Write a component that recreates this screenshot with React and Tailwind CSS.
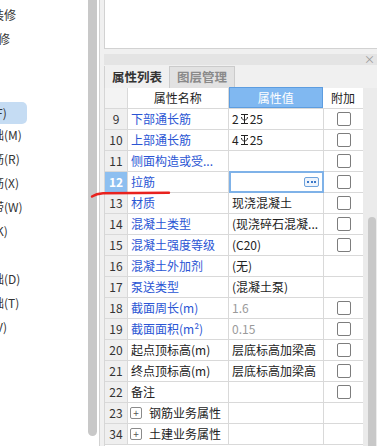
import React from "react";

const leftItems = [
  { t: "装修", ml: -8 },
  { t: "装修", ml: -14 },
  { t: "" },
  { t: "" },
  { t: "基础梁(F)", ml: -44, active: true },
  { t: "筏板基础(M)", ml: -44 },
  { t: "筏板主筋(R)", ml: -44 },
  { t: "筏板负筋(X)", ml: -44 },
  { t: "基础板带(W)", ml: -44 },
  { t: "集水坑(K)", ml: -44 },
  { t: "柱墩(Y)", ml: -44 },
  { t: "独立基础(D)", ml: -44 },
  { t: "条形基础(T)", ml: -44 },
  { t: "桩承台(V)", ml: -44 },
  { t: "桩(U)", ml: -44 },
  { t: "", ml: -44 },
  { t: "", ml: -44 },
  { t: "", ml: -44 },
];

// rebar grade glyph (HRB400)
const Rebar = () => (
  <svg width="9" height="12" viewBox="0 0 9 12" className="mx-[1px]">
    <path
      d="M1 1.5H8M1 10.5H8M4.5 1.5V10.5M1.5 4C1.5 8 7.5 8 7.5 4"
      fill="none"
      stroke="#222"
      strokeWidth="1"
    />
  </svg>
);

const rows = [
  { n: "9", name: "下部通长筋", blue: true, val: <span className="flex items-center">2<Rebar />25</span>, cb: true },
  { n: "10", name: "上部通长筋", blue: true, val: <span className="flex items-center">4<Rebar />25</span>, cb: true },
  { n: "11", name: "侧面构造或受...", blue: true, val: "", cb: true },
  { n: "12", name: "拉筋", blue: true, val: "", cb: true, sel: true },
  { n: "13", name: "材质", blue: true, val: "现浇混凝土", cb: true },
  { n: "14", name: "混凝土类型", blue: true, val: "(现浇碎石混凝...", cb: true },
  { n: "15", name: "混凝土强度等级", blue: true, val: "(C20)", cb: true },
  { n: "16", name: "混凝土外加剂", blue: true, val: "(无)" },
  { n: "17", name: "泵送类型", blue: true, val: "(混凝土泵)" },
  { n: "18", name: "截面周长(m)", blue: true, val: "1.6", grey: true, cb: true },
  { n: "19", name: "截面面积(m²)", blue: true, val: "0.15", grey: true, cb: true },
  { n: "20", name: "起点顶标高(m)", val: "层底标高加梁高", cb: true },
  { n: "21", name: "终点顶标高(m)", val: "层底标高加梁高", cb: true },
  { n: "22", name: "备注", val: "", cb: true },
  { n: "23", name: "钢筋业务属性", val: "", group: true },
  { n: "34", name: "土建业务属性", val: "", group: true },
];

const Checkbox = () => (
  <div className="w-[14px] h-[14px] rounded-[2px] border border-[#7d7d7d] bg-white" />
);

const App = () => {
  return (
    <div className="relative w-[377px] h-[446px] overflow-hidden flex bg-white text-[12px] text-[#222] font-['Noto_Sans_CJK_SC','Noto_Sans',sans-serif]">
      {/* left tree panel */}
      <div className="w-[88px] shrink-0 overflow-hidden pt-[3px] text-[#333]">
        {leftItems.map((it, i) => (
          <div key={i} className="h-[24px] flex items-center">
            {it.active ? (
              <div className="w-[27px] h-[22px] mt-[4px] rounded-r-[5px] bg-[#c5dcf3] flex items-center overflow-hidden">
                <span className="whitespace-nowrap" style={{ marginLeft: it.ml }}>
                  {it.t}
                </span>
              </div>
            ) : (
              <span className="whitespace-nowrap" style={{ marginLeft: it.ml || 0 }}>
                {it.t}
              </span>
            )}
          </div>
        ))}
      </div>

      {/* left scrollbar */}
      <div className="w-[11px] shrink-0 bg-white">
        <div className="w-[9px] h-[436px] bg-[#c8c8c8] rounded-b-[5px]" />
      </div>
      <div className="w-px shrink-0 bg-[#d2d2d2]" />
      <div className="w-[4px] shrink-0 bg-[#f0f0f0]" />

      {/* right property panel */}
      <div className="flex-1 flex flex-col bg-[#f0f0f0]">
        <div className="h-[49px] shrink-0 bg-white border-l border-b border-[#d2d2d2]" />
        <div className="h-[5px] shrink-0" />
        <div className="h-[11px] shrink-0 bg-[#e4e4e4] flex items-center justify-end pr-[2px] text-[#999] text-[11px] leading-none">
          ×
        </div>
        <div className="h-[23px] shrink-0 flex items-stretch pt-[1px] text-[12.5px] font-semibold">
          <div className="w-[65px] flex items-center justify-center text-[#333] border-l border-[#d2d2d2]">
            属性列表
          </div>
          <div className="w-[66px] flex items-center justify-center text-[#8a8a8a] bg-[#e2e2e2] border border-b-0 border-[#cbcbcb]">
            图层管理
          </div>
        </div>

        <div className="flex-1 flex">
          {/* table */}
          <div className="w-[259px] shrink-0 border-l border-[#d6d6d6] bg-white">
            <div className="h-[21px] flex border-b border-[#d9d9d9]">
              <div className="w-[23px] border-r border-[#d9d9d9] bg-[#f3f3f3]" />
              <div className="w-[101px] border-r border-[#d9d9d9] flex items-center justify-center">
                属性名称
              </div>
              <div className="w-[95px] bg-[#80b8f1] border border-[#5d9de0] -mt-px flex items-center justify-center text-white">
                属性值
              </div>
              <div className="w-[40px] flex items-center justify-center">附加</div>
            </div>

            {rows.map((r) => (
              <div key={r.n} className="h-[21px] flex border-b border-[#d9d9d9]">
                <div
                  className={
                    r.sel
                      ? "w-[23px] shrink-0 border-r border-[#d9d9d9] bg-[#8dbff0] text-white font-semibold flex items-center justify-center"
                      : "w-[23px] shrink-0 border-r border-[#d9d9d9] bg-[#efefef] text-[#333] flex items-center justify-center"
                  }
                >
                  {r.n}
                </div>
                <div
                  className={
                    r.blue
                      ? "w-[101px] shrink-0 border-r border-[#d9d9d9] pl-[3px] flex items-center whitespace-nowrap overflow-hidden text-[#2a55d4]"
                      : "w-[101px] shrink-0 border-r border-[#d9d9d9] pl-[3px] flex items-center whitespace-nowrap overflow-hidden text-[#222]"
                  }
                >
                  {r.group && (
                    <span className="w-[12px] h-[12px] mr-[7px] ml-[-1px] rounded-[2px] border border-[#8a8a8a] flex items-center justify-center text-[10px] leading-none text-[#555]">
                      +
                    </span>
                  )}
                  {r.name}
                </div>
                {r.sel ? (
                  <div className="w-[95px] shrink-0 border-2 border-[#7fb2e8] -mt-px h-[22px] flex items-center justify-end pr-[3px]">
                    <div className="w-[15px] h-[10px] rounded-[2px] border border-[#6fa3dc] bg-[#eef4fc] flex items-center justify-center gap-[1.5px]">
                      <span className="w-[2px] h-[2px] bg-[#3b78c8]" />
                      <span className="w-[2px] h-[2px] bg-[#3b78c8]" />
                      <span className="w-[2px] h-[2px] bg-[#3b78c8]" />
                    </div>
                  </div>
                ) : (
                  <div
                    className={
                      r.grey
                        ? "w-[95px] shrink-0 border-r border-[#d9d9d9] pl-[3px] flex items-center whitespace-nowrap overflow-hidden text-[#9a9a9a]"
                        : "w-[95px] shrink-0 border-r border-[#d9d9d9] pl-[3px] flex items-center whitespace-nowrap overflow-hidden"
                    }
                  >
                    {r.val}
                  </div>
                )}
                <div className="w-[40px] shrink-0 flex items-center justify-center">
                  {r.cb && <Checkbox />}
                </div>
              </div>
            ))}
          </div>

          {/* right scrollbar */}
          <div className="flex-1 flex flex-col pl-[5px] pr-px bg-[#ebebeb]">
            <div className="h-[129px] shrink-0" />
            <div className="flex-1 bg-[#c8c8c8] rounded-t-[5px]" />
          </div>
        </div>
      </div>

      {/* red hand-drawn mark */}
      <svg
        className="absolute left-[90px] top-[186px]"
        width="82"
        height="14"
        viewBox="0 0 82 14"
      >
        <path
          d="M2 10.5C5 8.5 8 7.5 13 7.2L79 6.8"
          fill="none"
          stroke="#e8221e"
          strokeWidth="2.4"
          strokeLinecap="round"
        />
      </svg>
    </div>
  );
};

export default App;
